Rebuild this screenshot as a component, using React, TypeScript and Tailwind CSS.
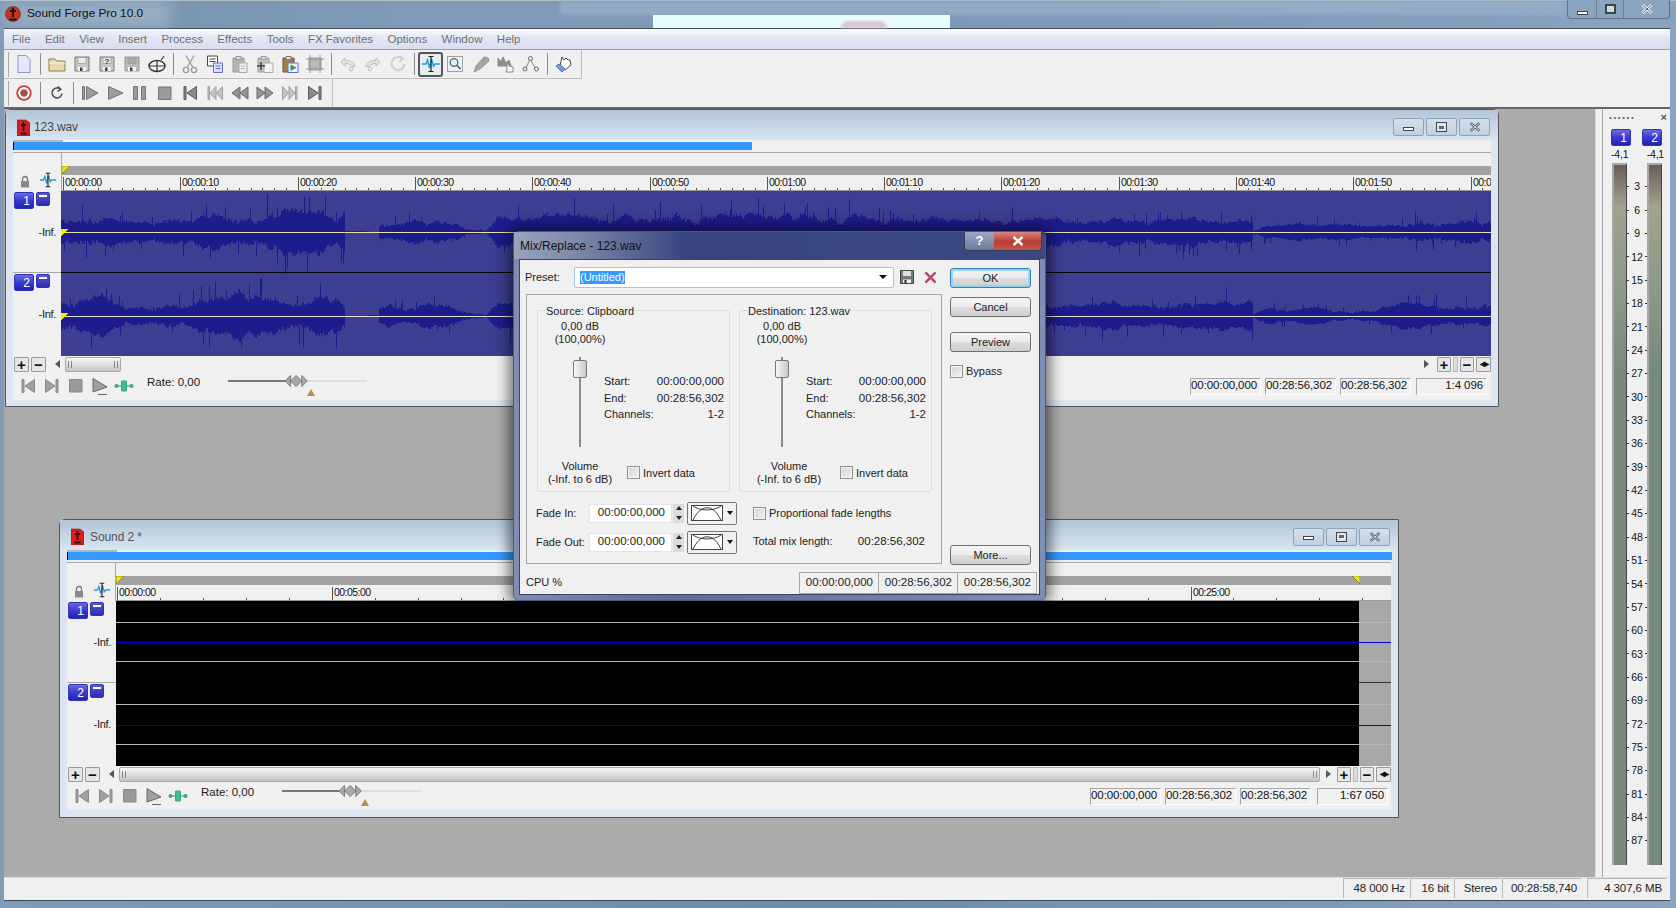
import type { ReactNode } from "react";

const FONT = "font-['Liberation_Sans',Arial,sans-serif]";

const MENUS = ["File", "Edit", "View", "Insert", "Process", "Effects", "Tools", "FX Favorites", "Options", "Window", "Help"];
const SCALE = Array.from({ length: 29 }, (_, i) => (i + 1) * 3);

function rng(seed: number) {
  let s = seed;
  return () => {
    s = (s * 16807) % 2147483647;
    return (s - 1) / 2147483646;
  };
}

// amplitude envelope, read off the picture: [x inside the track, amplitude]
const ENV: [number, number][] = [
  [0, 13], [40, 12], [60, 9], [100, 11], [170, 15], [230, 16], [283, 15], [284, 0.5], [317, 0.5], [318, 9], [394, 9], [405, 3],
  [425, 1], [436, 10], [480, 13], [700, 13], [983, 10], [1130, 10], [1191, 10], [1192, 1], [1205, 6], [1260, 6], [1310, 5], [1345, 9], [1430, 9],
];

function envAt(x: number) {
  for (let i = 1; i < ENV.length; i++) {
    if (x <= ENV[i][0]) {
      const [x0, a0] = ENV[i - 1];
      const [x1, a1] = ENV[i];
      return a0 + ((a1 - a0) * (x - x0)) / (x1 - x0 || 1);
    }
  }
  return 10;
}

function wavePath(cy: number, seed: number) {
  const r = rng(seed);
  let d = "";
  let w = 0;
  for (let x = 0; x < 1430; x++) {
    const a = envAt(x);
    w = (w + (r() - 0.5) * 0.3) * 0.93;
    const spike = r() < 0.05 ? a * (0.4 + r() * 1.0) : 0;
    const spike2 = r() < 0.04 ? a * (0.4 + r() * 0.9) : 0;
    const top = a * (1 + w) + r() * a * 0.22 + spike;
    const bot = a * (1 + w) + r() * a * 0.22 + spike2;
    d += `M${x + 0.5} ${(cy - top).toFixed(0)}V${(cy + bot).toFixed(0)}`;
  }
  return d;
}

function Glyph({ children, className = "" }: { children: ReactNode; className?: string }) {
  return (
    <svg viewBox="0 0 20 20" className={`h-[20px] w-[20px] ${className}`}>
      {children}
    </svg>
  );
}

const TRI = { fill: "#9c9c9c", stroke: "#747474" };
const DIM = { fill: "#c4c4c4", stroke: "#a0a0a0" };

function Floppy({ dim = false, children }: { dim?: boolean; children?: ReactNode }) {
  return (
    <>
      <path d="M3 3h14v14H3z" fill={dim ? "#b8b8b8" : "#c9c9c9"} stroke={dim ? "#999" : "#777"} />
      <path d="M6 3.5h8v6H6z" fill={dim ? "#a6a6a6" : "#ececec"} stroke={dim ? "#999" : "#888"} strokeWidth=".6" />
      <path d="M6 13h8v4H6z" fill="#f2f2f2" />
      <path d="M8 13.5h2.5v3.5H8z" fill="#444" />
      {children}
    </>
  );
}

const TB1: Record<string, ReactNode> = {
  new: <path d="M4 1.5h8l4 4v13H4z" fill="#e4e8f8" stroke="#8d92dc" />,
  open: (
    <>
      <path d="M2 5h6l2 2h8v10H2z" fill="#e6dab0" stroke="#8c7c4e" />
      <path d="M2 9h16" stroke="#fff5d0" />
    </>
  ),
  save: <Floppy />,
  saveas: (
    <Floppy>
      <text x="10" y="10" textAnchor="middle" fontSize="8" fontWeight="700" fill="#333">?</text>
    </Floppy>
  ),
  wave: <Floppy dim />,
  burn: (
    <>
      <ellipse cx="10" cy="12" rx="8" ry="5.5" fill="#f4f4f4" stroke="#333" strokeWidth="1.4" />
      <path d="M2 12h16M10 7v10M14 6l3-4" stroke="#333" strokeWidth="1.2" fill="none" />
    </>
  ),
  cut: (
    <>
      <circle cx="6" cy="16" r="2.6" fill="none" stroke="#9a9a9a" strokeWidth="1.4" />
      <circle cx="14" cy="16" r="2.6" fill="none" stroke="#9a9a9a" strokeWidth="1.4" />
      <path d="M7 13.6 14 1.5M13 13.6 6 1.5" stroke="#a4a4a4" strokeWidth="1.4" />
    </>
  ),
  copy: (
    <>
      <path d="M2.5 2h10v10h-10z" fill="#fff" stroke="#444" />
      <path d="M4.5 5h6M4.5 7.5h6" stroke="#444" />
      <path d="M8.5 9h9v9.5h-9z" fill="#dfe2f8" stroke="#666cd0" />
      <path d="M10.5 12h5M10.5 14.5h5" stroke="#666cd0" />
    </>
  ),
  paste: (
    <>
      <path d="M3 4h11v14H3z" fill="#b4b4b4" stroke="#999" />
      <path d="M6 2.5h5v3H6z" fill="#ddd" stroke="#999" />
      <path d="M9 9h8v9.5H9z" fill="#eee" stroke="#aaa" />
      <path d="M11 12h4M11 14.5h4" stroke="#bbb" />
    </>
  ),
  pastenew: (
    <>
      <path d="M3 4h11v14H3z" fill="#c4c4c4" stroke="#999" />
      <path d="M6 2.5h5v3H6z" fill="#ddd" stroke="#999" />
      <path d="M9 9h9v9.5H9z" fill="#f4f4f4" stroke="#aaa" />
      <path d="M2 12h8M6 8v8" stroke="#444" strokeWidth="1.6" />
    </>
  ),
  mix: (
    <>
      <path d="M3 4h11v14H3z" fill="#a67c4a" stroke="#6e5030" />
      <path d="M6 2.5h5v3H6z" fill="#e8e8e8" stroke="#777" />
      <path d="M8 9h10v9.5H8z" fill="#eef0fb" stroke="#666cd0" />
      <path d="M10.5 10.5l6 3.2-6 3.2z" fill="#2e9a58" />
    </>
  ),
  crop: (
    <>
      <path d="M4 4h12v12H4z" fill="#b8b8b8" stroke="#999" />
      <path d="M1 5h18M1 15h18M5 1v18M15 1v18" stroke="#9a9a9a" />
    </>
  ),
  undo: (
    <>
      <path d="M3 8l4-4v2.500c5 0 9 1 10 6h-3c-1-2-4-3-7-3v2.500z" fill="#e4e4e4" stroke="#bcbcbc" />
      <circle cx="13" cy="15" r="1.800" fill="none" stroke="#bcbcbc" />
    </>
  ),
  redo: (
    <>
      <path d="M17 8l-4-4v2.500c-5 0-9 1-10 6h3c1-2 4-3 7-3v2.500z" fill="#e4e4e4" stroke="#bcbcbc" />
      <circle cx="7" cy="15" r="1.800" fill="none" stroke="#bcbcbc" />
    </>
  ),
  repeat: <path d="M14.500 4.800A6.500 6.500 0 1 0 16.500 10M11.500 2l3.400 2.800-3.400 2.600" fill="none" stroke="#d0d0d0" strokeWidth="2.200" />,
  edit: (
    <>
      <path d="M1 10h4l1.500-4 2 8 2-9 2 7 1.500-2h5" fill="none" stroke="#2a9ad8" strokeWidth="1.500" />
      <path d="M7.500 2.500h5M7.500 17.500h5M10 2.500v15" stroke="#222" strokeWidth="1.200" />
    </>
  ),
  zoom: (
    <>
      <path d="M1.500 2.500h15v15h-15z" fill="none" stroke="#555" strokeDasharray="1 1" />
      <circle cx="8" cy="8.500" r="3.800" fill="#dcecf8" stroke="#4f6b85" strokeWidth="1.300" />
      <path d="M11 11.500l3.500 3.500" stroke="#555" strokeWidth="1.600" />
    </>
  ),
  pencil: <path d="M3 18l2-6L13 3l4 1 1 3-9 8zM13 3l-1 5" fill="#a4a4a4" stroke="#999" />,
  event: (
    <>
      <path d="M2 4l3 4 2-5 3 6 3-3 2 6H2z" fill="#8f8f8f" stroke="#888" />
      <path d="M11 10v6l-1 2h7v-5l-4-1v-2z" fill="#fff" stroke="#888" />
    </>
  ),
  env: (
    <>
      <path d="M5 14l4-9 5 9" fill="none" stroke="#8a8a8a" />
      <circle cx="4" cy="15" r="2" fill="#f0f0f0" stroke="#666" />
      <circle cx="9.500" cy="4.500" r="2" fill="#f0f0f0" stroke="#666" />
      <circle cx="15.500" cy="15" r="2" fill="#f0f0f0" stroke="#666" />
    </>
  ),
  hand: (
    <>
      <path d="M8 3l2 3 2-2 2 2 2 0 1 5-6 5-5-4z" fill="#fff" stroke="#444" />
      <path d="M2 12l6 6 3-3-6-5z" fill="#7a9bd8" stroke="#4a6fb8" />
    </>
  ),
};

const TB2: Record<string, ReactNode> = {
  record: (
    <>
      <circle cx="10" cy="10" r="6.800" fill="#f4f4f4" stroke="#cc3a3a" strokeWidth="1.700" />
      <circle cx="10" cy="10" r="3.300" fill="#b04848" stroke="#777" />
    </>
  ),
  loop: <path d="M13.500 6.300A5 5 0 1 0 15 10.500M11 3.500l2.800 2.900-3.300 1.800" fill="none" stroke="#555" strokeWidth="1.600" />,
  playall: (
    <>
      <path d="M2.500 3.500h2v13h-2z" {...TRI} />
      <path d="M6.500 3.500 18 10 6.500 16.500z" {...TRI} />
    </>
  ),
  play: <path d="M3.500 3.500 18 10 3.500 16.500z" {...TRI} />,
  pause: <path d="M3.500 3.500h4v13h-4zM11.500 3.500h4v13h-4z" {...TRI} />,
  stop: <path d="M3.500 4h12.500v12.500H3.500z" {...TRI} />,
  prev: <path d="M4 3.500h2v13H4zM16.500 3.500v13L7 10z" fill="#8a8a8a" stroke="#5a5a5a" />,
  first: <path d="M3 3.500h1.500v13H3zM11 3.500v13L5 10zM17.500 3.500v13L11.500 10z" {...DIM} />,
  rew: <path d="M10 4v12L2 10zM18 4v12l-8-6z" fill="#949494" stroke="#666" />,
  ff: <path d="M10 4v12l8-6zM2 4v12l8-6z" fill="#949494" stroke="#666" />,
  next: <path d="M17 3.500h-1.500v13H17zM9 3.500v13l6-6.500zM2.500 3.500v13l6-6.500z" {...DIM} />,
  end: <path d="M16 3.500h-2v13h2zM3.500 3.500v13L13 10z" fill="#8a8a8a" stroke="#5a5a5a" />,
};

function ToolBtn({ icon, set, active }: { icon: string; set: Record<string, ReactNode>; active?: boolean }) {
  return (
    <div className={`flex h-[25px] w-[25px] flex-none items-center justify-center ${active ? "rounded-[3px] border-2 border-[#555] bg-[#e6edf3]" : ""}`}>
      <Glyph>{set[icon]}</Glyph>
    </div>
  );
}

function Sep() {
  return (
    <div className="flex h-[25px] w-[8px] flex-none items-center justify-center">
      <div className="h-[22px] w-px bg-[#8c8c8c]" />
    </div>
  );
}

function Grip() {
  return <div className="ml-[4px] mr-[2px] h-[25px] w-px flex-none bg-[#a8a8a8]" />;
}

function MainToolbars() {
  return (
    <div className="h-[57px] bg-[#f0f0f0]">
      <div className="flex h-[29px] w-[578px] items-center border-b border-r border-[#bdbdbd]">
        <Grip />
        <ToolBtn icon="new" set={TB1} />
        <Sep />
        {["open", "save", "saveas", "wave", "burn"].map((i) => <ToolBtn key={i} icon={i} set={TB1} />)}
        <Sep />
        {["cut", "copy", "paste", "pastenew", "mix", "crop"].map((i) => <ToolBtn key={i} icon={i} set={TB1} />)}
        <Sep />
        {["undo", "redo", "repeat"].map((i) => <ToolBtn key={i} icon={i} set={TB1} />)}
        <Sep />
        <ToolBtn icon="edit" set={TB1} active />
        {["zoom", "pencil", "event", "env"].map((i) => <ToolBtn key={i} icon={i} set={TB1} />)}
        <Sep />
        <ToolBtn icon="hand" set={TB1} />
      </div>
      <div className="flex h-[28px] w-[329px] items-center border-r border-[#bdbdbd]">
        <Grip />
        <ToolBtn icon="record" set={TB2} />
        <Sep />
        <ToolBtn icon="loop" set={TB2} />
        <Sep />
        {["playall", "play", "pause", "stop", "prev", "first", "rew", "ff", "next", "end"].map((i) => <ToolBtn key={i} icon={i} set={TB2} />)}
      </div>
    </div>
  );
}

function Flag({ right }: { right?: boolean }) {
  return (
    <svg viewBox="0 0 7 7" className="h-[8px] w-[8px]">
      <path d={right ? "M0 0h7v7z" : "M0 0h7L0 7z"} fill="#f5e800" stroke="#555" strokeWidth=".5" />
    </svg>
  );
}

function ChanBtn({ n }: { n: number }) {
  return (
    <div className="flex h-[17px] w-[20px] flex-none items-center justify-end rounded-[2px] border border-[#3232b4] bg-[linear-gradient(#6a6ae0,#3a3ad0_50%,#2323ae)] pr-[3px] text-[12px] leading-none text-white">
      {n}
    </div>
  );
}

function ChanCol({ n, h }: { n: number; h: string }) {
  return (
    <div className={`relative flex-none border-b border-[#a8a8a8] ${h}`}>
      <div className="flex gap-[2px] pl-[1px] pt-[1px]">
        <ChanBtn n={n} />
        <div className="flex h-[14px] w-[14px] items-start justify-center rounded-[2px] border border-[#3232b4] bg-[linear-gradient(#5858d8,#2c2cb0)] pt-[2px]">
          <div className="h-[2px] w-[8px] bg-white" />
        </div>
      </div>
      <div className="absolute right-[5px] top-[35px] text-[11px] leading-[13px] tracking-[-0.3px] text-[#222]">-Inf.</div>
    </div>
  );
}

function Transport() {
  return (
    <div className="flex items-center pl-[5px]">
      <div className="flex gap-[4px]">
        <Glyph><path d="M4 3.500h2v13H4zM16.500 3.500v13L7 10z" fill="#a0a0a0" stroke="#888" /></Glyph>
        <Glyph><path d="M16 3.500h-2v13h2zM3.500 3.500v13L13 10z" fill="#a0a0a0" stroke="#888" /></Glyph>
        <Glyph><path d="M3.500 3.500H16V16H3.500z" fill="#9a9a9a" stroke="#888" /></Glyph>
        <Glyph><path d="M3 2.500 17 11 3 16zM8 18.500h9" fill="#a0a0a0" stroke="#666" /></Glyph>
        <Glyph>
          <path d="M1 10h18" stroke="#3aa880" strokeWidth="1.200" />
          <circle cx="2.500" cy="10" r="2" fill="#3aa880" />
          <circle cx="17.500" cy="10" r="2" fill="#3aa880" />
          <path d="M7.500 5h5v10h-5z" fill="#45b894" stroke="#3aa880" />
        </Glyph>
      </div>
      <div className="-mt-[6px] ml-[13px] w-[81px] text-[11.5px] text-[#1a1a1a]">Rate: 0,00</div>
      <div className="relative -mt-[10px] h-[2px] w-[139px] bg-[linear-gradient(90deg,#777_0,#777_45%,#ddd_45%,#ddd_100%)]">
        <svg viewBox="0 0 28 12" className="absolute left-[57px] top-[-5px] h-[12px] w-[26px]">
          <path d="M0 6l6-6v12zM6 6l6-6 6 6-6 6zM18 0l6 6-6 6z" fill="#a8a8a8" stroke="#777" />
        </svg>
        <svg viewBox="0 0 8 7" className="absolute left-[79px] top-[9px] h-[7px] w-[8px]">
          <path d="M4 0l4 7H0z" fill="#bf8c50" />
        </svg>
      </div>
    </div>
  );
}

function Cell({ children, w = "w-[71px]" }: { children: ReactNode; w?: string }) {
  return (
    <div className={`flex h-[17px] flex-none items-center justify-end border border-b-white border-l-[#a8a8a8] border-r-white border-t-[#a8a8a8] pr-[3px] text-[11.5px] tracking-[-0.1px] text-[#111] ${w}`}>
      {children}
    </div>
  );
}

function SmallBtn({ children, w = "w-[15px]" }: { children: ReactNode; w?: string }) {
  return (
    <div className={`flex h-[15px] flex-none items-center justify-center rounded-[1px] border border-[#9a9a9a] bg-[#e6e6e6] text-[15px] font-bold leading-none text-[#111] ${w}`}>
      {children}
    </div>
  );
}

function Thumb({ className }: { className: string }) {
  return (
    <div className={`flex h-[15px] items-center justify-between rounded-[2px] border border-[#a8a8a8] bg-[linear-gradient(#f6f6f6,#dcdcdc_55%,#c4c4c4)] px-[2px] ${className}`}>
      <div className="h-[7px] w-[4px] border-x border-[#888]" />
      <div className="h-[7px] w-[4px] border-x border-[#888]" />
    </div>
  );
}

function MdiBtns() {
  const cls = "flex h-[18px] w-[31px] items-center justify-center rounded-[2px] border border-[#8fa3b8] bg-[linear-gradient(#d4e0ec,#c0d0e0)]";
  return (
    <div className="flex gap-[2px]">
      <div className={cls}><div className="mt-[3px] h-[4px] w-[11px] border border-[#444] bg-white" /></div>
      <div className={cls}><div className="flex h-[10px] w-[11px] items-center justify-center border border-[#444] bg-[#dfe8f0]"><div className="h-[3px] w-[5px] bg-[#667]" /></div></div>
      <div className={cls}>
        <svg viewBox="0 0 12 10" className="h-[10px] w-[12px]">
          <path d="M1.500 1 10.500 9M10.500 1 1.500 9" stroke="#667" strokeWidth="2.600" />
          <path d="M1.500 1 10.500 9M10.500 1 1.500 9" stroke="#eef" strokeWidth=".8" />
        </svg>
      </div>
    </div>
  );
}

function DocIcon() {
  return (
    <svg viewBox="0 0 13 17" className="h-[17px] w-[13px] flex-none">
      <path d="M0 1h9l4 3v13H0z" fill="#d81e1e" stroke="#8a1010" strokeWidth=".6" />
      <path d="M6.500 3v9M4 6h5M3.500 14.500h6" stroke="#331010" strokeWidth="1.800" />
    </svg>
  );
}

function Ticks({ major, minor, n }: { major: number; minor: number; n: number }) {
  let d = "";
  const count = Math.round(major / minor);
  for (let i = 0; i <= n * count + count; i++) {
    const x = Math.round(i * minor) + 1.5;
    d += `M${x} ${i % count === 0 ? 2 : 13}V16`;
  }
  return (
    <svg className="absolute inset-0 h-[16px] w-full" shapeRendering="crispEdges">
      <path d={d} stroke="#555" fill="none" />
      <path d="M0 15.500H2000" stroke="#999" />
    </svg>
  );
}

function Ruler({ labels, major, minor }: { labels: string[]; major: number; minor: number }) {
  return (
    <div className="relative h-[16px] overflow-hidden bg-[#f0f0f0]">
      <Ticks major={major} minor={minor} n={labels.length} />
      {labels.map((l, i) => (
        <span key={l} className="absolute top-[1px] pl-[2px] text-[10.5px] leading-[12px] tracking-[-0.55px] text-[#111]" style={{ left: Math.round(i * major) + 1 }}>
          {l}
        </span>
      ))}
    </div>
  );
}

function RulerHead({ labels, major, minor, endFlag, blueClass }: { labels: string[]; major: number; minor: number; endFlag?: string; blueClass: string }) {
  return (
    <>
      <div className="relative h-[12px] bg-[#f0f0f0]">
        <div className="absolute left-0 top-0 h-[2px] w-[50px] bg-[#b4b4b4]" />
        <div className="absolute left-0 top-[2px] h-[8px] w-[1px] bg-black" />
        <div className={`ml-[1px] mt-[2px] h-[8px] bg-[#3399ff] ${blueClass}`} />
      </div>
      <div className="flex h-[39px] border-t border-[#a8a8a8]">
        <div className="flex w-[48px] flex-none items-end justify-around bg-[#f0f0f0] pb-[2px] pl-[3px]">
          <svg viewBox="0 0 10 13" className="mb-[1px] h-[13px] w-[10px]">
            <path d="M2.500 6V4a2.500 2.500 0 0 1 5 0v2" fill="none" stroke="#777" strokeWidth="1.300" />
            <path d="M1 6h8v6.500H1z" fill="#8a8a8a" />
          </svg>
          <Glyph className="!h-[18px] !w-[18px]">{TB1.edit}</Glyph>
        </div>
        <div className="min-w-0 flex-1 border-l border-[#a8a8a8]">
          <div className="h-[13px] bg-[#f0f0f0]" />
          <div className="flex h-[9px] justify-between overflow-hidden bg-[#a2a2a2]">
            <Flag />
            {endFlag && <div className={endFlag}><Flag right /></div>}
          </div>
          <Ruler labels={labels} major={major} minor={minor} />
        </div>
      </div>
    </>
  );
}

const LABELS1 = ["00:00:00", "00:00:10", "00:00:20", "00:00:30", "00:00:40", "00:00:50", "00:01:00", "00:01:10", "00:01:20", "00:01:30", "00:01:40", "00:01:50", "00:02:00"];
const LABELS2 = ["00:00:00", "00:05:00", "00:10:00", "00:15:00", "00:20:00", "00:25:00"];
const WAVE1 = wavePath(41, 12345);
const WAVE2 = wavePath(125, 54321);

function ScrollEnd() {
  return (
    <>
      <SmallBtn w="w-[14px]">+</SmallBtn>
      <div className="h-[15px] w-[5px] border border-[#bbb] bg-[#ddd]" />
      <SmallBtn w="w-[14px]">−</SmallBtn>
      <SmallBtn w="w-[15px]"><span className="text-[10px] tracking-[-1px]">◂▸</span></SmallBtn>
    </>
  );
}

function Doc1() {
  return (
    <div className="absolute left-[5px] top-[109px] flex h-[298px] w-[1494px] flex-col rounded-tl-[6px] rounded-tr-[6px] border border-[#555] bg-[#dbe6f2]">
      <div className="flex h-[30px] flex-none items-center justify-between bg-[linear-gradient(#b3c5d7,#d8e5f2)] pl-[11px] pr-[8px] pt-[4px]">
        <div className="flex items-center gap-[4px] text-[12px] tracking-[-0.1px] text-[#444]"><DocIcon />123.wav</div>
        <MdiBtns />
      </div>
      <div className="mx-[7px] flex h-[260px] flex-col bg-[#f0f0f0]">
        <RulerHead labels={LABELS1} major={117.3} minor={11.73} blueClass="w-[738px]" />
        <div className="flex h-[165px] flex-none">
          <div className="w-[48px] flex-none">
            <ChanCol n={1} h="h-[82px]" />
            <ChanCol n={2} h="h-[83px] !border-b-0" />
          </div>
          <svg className="h-[165px] flex-1" shapeRendering="crispEdges">
            <rect width="1500" height="165" fill="#3d3d91" />
            <path d={WAVE1} stroke="#1c1c8c" fill="none" />
            <path d={WAVE2} stroke="#1c1c8c" fill="none" />
            <path d="M0 41.500H1500" stroke="#e6dfb0" />
            <path d="M0 81.500H1500" stroke="#000" />
            <path d="M0 125.500H1500" stroke="#e8e4d4" />
            <path d="M0 38v7l7-7zM0 122v7l7-7z" fill="#f5e800" />
          </svg>
        </div>
        <div className="flex h-[16px] flex-none items-center gap-[2px] pl-[1px]">
          <SmallBtn>+</SmallBtn>
          <SmallBtn>−</SmallBtn>
          <div className="ml-[7px] mr-[3px] h-0 w-0 border-y-[4px] border-r-[5px] border-y-transparent border-r-[#555]" />
          <Thumb className="w-[56px]" />
          <div className="flex-1" />
          <div className="mr-[6px] h-0 w-0 border-y-[4px] border-l-[5px] border-y-transparent border-l-[#555]" />
          <ScrollEnd />
        </div>
        <div className="flex flex-1 items-center justify-between pr-[4px]">
          <Transport />
          <div className="flex gap-[4px]">
            <Cell>00:00:00,000</Cell>
            <Cell>00:28:56,302</Cell>
            <Cell>00:28:56,302</Cell>
            <div className="ml-[1px]"><Cell>1:4 096</Cell></div>
          </div>
        </div>
      </div>
    </div>
  );
}

function Doc2() {
  return (
    <div className="absolute left-[59px] top-[519px] flex h-[299px] w-[1340px] flex-col rounded-tl-[6px] border border-[#555] bg-[#dbe6f2]">
      <div className="flex h-[30px] flex-none items-center justify-between bg-[linear-gradient(#b3c5d7,#d8e5f2)] pl-[11px] pr-[8px] pt-[3px]">
        <div className="flex items-center gap-[6px] text-[12px] tracking-[-0.1px] text-[#555]"><DocIcon />Sound 2 *</div>
        <MdiBtns />
      </div>
      <div className="mx-[7px] flex h-[260px] flex-col bg-[#f0f0f0]">
        <RulerHead labels={LABELS2} major={214.7} minor={42.94} blueClass="w-full" endFlag="mr-[31px]" />
        <div className="flex h-[165px] flex-none">
          <div className="w-[49px] flex-none">
            <ChanCol n={1} h="h-[82px]" />
            <ChanCol n={2} h="h-[83px] !border-b-0" />
          </div>
          <svg className="h-[165px] flex-1" shapeRendering="crispEdges">
            <rect width="1500" height="165" fill="#a8a8a8" />
            <rect width="1243" height="165" fill="#000" />
            <path d="M0 21.500H1500M0 60.500H1500M0 103.500H1500M0 143.500H1500" stroke="#b8b8b8" />
            <path d="M0 41.500H1500M0 124.500H1500" stroke="#0000e0" />
            <path d="M1243 81.500H1500" stroke="#333" />
          </svg>
        </div>
        <div className="flex h-[16px] flex-none items-center gap-[2px] pl-[1px]">
          <SmallBtn>+</SmallBtn>
          <SmallBtn>−</SmallBtn>
          <div className="ml-[7px] mr-[3px] h-0 w-0 border-y-[4px] border-r-[5px] border-y-transparent border-r-[#555]" />
          <Thumb className="flex-1" />
          <div className="mx-[4px] h-0 w-0 border-y-[4px] border-l-[5px] border-y-transparent border-l-[#555]" />
          <ScrollEnd />
        </div>
        <div className="flex flex-1 items-center justify-between pr-[3px]">
          <Transport />
          <div className="flex gap-[4px]">
            <Cell>00:00:00,000</Cell>
            <Cell>00:28:56,302</Cell>
            <Cell>00:28:56,302</Cell>
            <div className="ml-[2px]"><Cell>1:67 050</Cell></div>
          </div>
        </div>
      </div>
    </div>
  );
}

function AeroBtn({ children, ok, className = "" }: { children: ReactNode; ok?: boolean; className?: string }) {
  return (
    <div className={`flex h-[20px] w-[81px] items-center justify-center rounded-[3px] border bg-[linear-gradient(#f4f4f4,#ececec_48%,#dcdcdc_52%,#cfcfcf)] text-[11px] text-[#222] ${ok ? "border-[#3c7fb1] shadow-[inset_0_0_0_2px_#8fd5f5]" : "border-[#707070]"} ${className}`}>
      {children}
    </div>
  );
}

function Check({ label, className = "" }: { label: string; className?: string }) {
  return (
    <div className={`flex items-center gap-[3px] whitespace-nowrap text-[11px] text-[#222] ${className}`}>
      <div className="h-[13px] w-[13px] flex-none border border-[#8e8f8f] bg-[linear-gradient(135deg,#d4d4d4,#f2f2f2)] shadow-[inset_0_0_0_1px_#f4f4f4]" />
      {label}
    </div>
  );
}

function Group({ title, volCls, chkCls }: { title: string; volCls: string; chkCls: string }) {
  return (
    <div className="relative h-[182px] w-[193px] rounded-[3px] border border-[#dcdcdc]">
      <div className="absolute -top-[7px] left-[7px] bg-[#f0f0f0] px-[1px] text-[11px] leading-[14px] text-[#222]">{title}</div>
      <div className="flex h-full">
        <div className="ml-[18px] flex w-[48px] flex-none flex-col items-center pt-[9px] leading-[13px]">
          <div className="whitespace-nowrap text-center">0,00 dB<br />(100,00%)</div>
          <div className="relative mt-[11px] h-[90px] w-[2px] flex-none bg-[#8a8a8a]">
            <div className="absolute -left-[6px] top-[3px] h-[18px] w-[14px] rounded-[2px] border border-[#777] bg-[linear-gradient(90deg,#f8f8f8,#c8c8c8)]" />
          </div>
          <div className={`mt-[13px] whitespace-nowrap text-center ${volCls}`}>Volume<br />(-Inf. to 6 dB)</div>
        </div>
        <div className="flex min-w-0 flex-1 flex-col justify-between pb-[10px] pr-[5px] pt-[62px]">
          <div className="grid grid-cols-[auto_1fr] leading-[16.5px]">
            <span>Start:</span><span className="text-right text-[11.5px]">00:00:00,000</span>
            <span>End:</span><span className="text-right text-[11.5px]">00:28:56,302</span>
            <span>Channels:</span><span className="text-right text-[11.5px]">1-2</span>
          </div>
          <Check label="Invert data" className={chkCls} />
        </div>
      </div>
    </div>
  );
}

function CurveBtn() {
  return (
    <div className="ml-[3px] flex h-[23px] w-[50px] flex-none items-center gap-[4px] rounded-[2px] border border-[#777] pl-[3px]">
      <svg viewBox="0 0 32 16" className="h-[16px] w-[32px] border border-[#444] bg-white">
        <path d="M0 16C6 4 12 2 16 2s10 2 16 14M0 0c8 6 24 6 32 0" fill="none" stroke="#222" />
      </svg>
      <div className="h-0 w-0 border-x-[3px] border-t-[4px] border-x-transparent border-t-[#111]" />
    </div>
  );
}

function FadeRow({ label, children }: { label: string; children: ReactNode }) {
  return (
    <div className="flex h-[24px] items-center pl-[9px]">
      <div className="w-[53px] flex-none">{label}</div>
      <div className="flex h-[19px] w-[83px] flex-none items-center justify-end border border-[#e4e4e4] bg-white pr-[6px] text-[11.5px]">00:00:00,000</div>
      <div className="ml-[1px] flex h-[19px] w-[11px] flex-none flex-col items-center justify-around bg-[#dcdcdc]">
        <div className="h-0 w-0 border-x-[3px] border-b-[4px] border-x-transparent border-b-[#222]" />
        <div className="h-0 w-0 border-x-[3px] border-t-[4px] border-x-transparent border-t-[#222]" />
      </div>
      <CurveBtn />
      {children}
    </div>
  );
}

function Dialog() {
  return (
    <div className="absolute left-[513px] top-[231px] flex h-[370px] w-[533px] flex-col rounded-[6px] border border-[#4c5c78] bg-[linear-gradient(90deg,#7e8db0,#5c6c98_30%,#7d8fb4)] shadow-[0_0_14px_4px_rgba(0,0,0,0.55)]">
      <div className="relative flex h-[27px] flex-none items-center bg-[linear-gradient(90deg,#98a4bc,#7c88a8_12%,#3a4580_32%,#3c4880)] pl-[6px] text-[12px] text-[#111]">
        Mix/Replace - 123.wav
        <div className="absolute right-[3px] top-0 flex h-[19px] overflow-hidden rounded-b-[4px] border border-t-0 border-[#333d58]">
          <div className="flex w-[29px] items-center justify-center bg-[linear-gradient(#9aa8c4,#6c7a9a)] text-[13px] font-bold text-white">?</div>
          <div className="flex w-[47px] items-center justify-center bg-[linear-gradient(#d98880,#bb3a30_55%,#c05850)]">
            <svg viewBox="0 0 12 10" className="h-[10px] w-[12px]"><path d="M1.500 1 10.500 9M10.500 1 1.500 9" stroke="#fff" strokeWidth="2.400" /></svg>
          </div>
        </div>
      </div>
      <div className="mx-[5px] flex h-[336px] flex-col border border-[#3a4560] bg-[#f0f0f0] text-[11px] text-[#222]">
        <div className="flex h-[304px] flex-none">
          <div className="w-[423px] flex-none">
            <div className="flex h-[34px] items-center pl-[5px]">
              <div className="w-[49px] flex-none">Preset:</div>
              <div className="flex h-[21px] w-[320px] flex-none items-center justify-between rounded-[2px] border border-[#a9c4dc] bg-white pl-[5px] pr-[6px]">
                <span className="bg-[#3399ff] leading-[13px] text-white">(Untitled)</span>
                <div className="h-0 w-0 border-x-[4px] border-t-[4px] border-x-transparent border-t-[#111]" />
              </div>
              <svg viewBox="0 0 14 14" className="ml-[6px] h-[14px] w-[14px] flex-none">
                <path d="M.5.5h13v13H.5z" fill="#777" stroke="#444" />
                <path d="M3 1h8v5H3z" fill="#ddd" />
                <path d="M3 9.500h8V13H3z" fill="#f0f0f0" />
                <path d="M4.500 10h2v3h-2z" fill="#222" />
              </svg>
              <svg viewBox="0 0 14 14" className="ml-[10px] h-[13px] w-[13px] flex-none">
                <path d="M1.500 1.500l11 11M12.500 1.500l-11 11" stroke="#b04a62" strokeWidth="2.600" />
              </svg>
            </div>
            <div className="ml-[6px] h-[270px] w-[416px] border border-[#a8a8a8] pl-[10px] pt-[15px]">
              <div className="flex gap-[9px]">
                <Group title="Source: Clipboard" volCls="" chkCls="ml-[23px]" />
                <Group title="Destination: 123.wav" volCls="pl-[14px]" chkCls="ml-[34px]" />
              </div>
            </div>
            <div className="relative -mt-[63px] ml-[7px] flex w-[414px] flex-col">
              <FadeRow label="Fade In:">
                <Check label="Proportional fade lengths" className="ml-[16px]" />
              </FadeRow>
              <div className="mt-[5px]">
                <FadeRow label="Fade Out:">
                  <div className="ml-[16px] flex w-[172px] justify-between">
                    <span>Total mix length:</span>
                    <span className="text-[11.5px]">00:28:56,302</span>
                  </div>
                </FadeRow>
              </div>
            </div>
          </div>
          <div className="ml-[7px] flex w-[81px] flex-col pt-[8px]">
            <AeroBtn ok>OK</AeroBtn>
            <AeroBtn className="mt-[9px]">Cancel</AeroBtn>
            <AeroBtn className="mt-[15px]">Preview</AeroBtn>
            <Check label="Bypass" className="mt-[11px]" />
            <AeroBtn className="mb-[-1px] mt-auto">More...</AeroBtn>
          </div>
        </div>
        <div className="flex flex-1 items-end justify-between pl-[6px] pr-[2px]">
          <div className="pb-[4px]">CPU %</div>
          <div className="flex h-[22px] border-b border-r border-t border-[#a8a8a8] text-[11.5px]">
            <div className="flex w-[79px] items-center justify-end border-l border-[#a8a8a8] pr-[5px]">00:00:00,000</div>
            <div className="flex w-[79px] items-center justify-end border-l border-[#a8a8a8] pr-[5px]">00:28:56,302</div>
            <div className="flex w-[79px] items-center justify-end border-l border-[#a8a8a8] pr-[5px]">00:28:56,302</div>
          </div>
        </div>
      </div>
    </div>
  );
}

function Meter() {
  return (
    <div className="h-[702px] w-[15px] flex-none border-l-2 border-r border-t-2 border-l-[#a8a8a8] border-r-[#444] border-t-[#a8a8a8] bg-[linear-gradient(#6b5d58,#a2a28e_6%,#8a9a88_18%,#76897b_30%,#76897b)]" />
  );
}

function MeterPane() {
  return (
    <div className="flex w-[75px] flex-none border-l border-[#dcdcdc] bg-[#f0f0f0]">
      <div className="h-full w-[7px] flex-none border-r border-[#a8a8a8]" />
      <div className="min-w-0 flex-1 text-[11px] text-[#111]">
        <div className="flex h-[14px] items-center justify-between pl-[6px] pr-[3px] pt-[3px]">
          <span className="text-[8px] leading-none tracking-[1.6px] text-[#666]">••••••</span>
          <span className="text-[11px] font-bold leading-none text-[#555]">×</span>
        </div>
        <div className="flex gap-[11px] pl-[8px] pt-[6px]">
          <ChanBtn n={1} />
          <ChanBtn n={2} />
        </div>
        <div className="flex h-[17px] items-center justify-between pl-[8px] pr-[6px] text-[10.5px] tracking-[-0.2px]">
          <span>-4,1</span>
          <span>-4,1</span>
        </div>
        <div className="flex pl-[9px]">
          <Meter />
          <div className="w-[20px] flex-none pt-[12px]">
            {SCALE.map((s) => (
              <div key={s} className="flex h-[23.36px] items-center justify-between">
                <div className="h-px w-[2px] bg-[#333]" />
                <span className="text-[10.5px] leading-none tracking-[-0.2px]">{s}</span>
                <div className="h-px w-[2px] bg-[#333]" />
              </div>
            ))}
          </div>
          <Meter />
        </div>
      </div>
    </div>
  );
}

function StatusCell({ w, children }: { w: string; children: ReactNode }) {
  return (
    <div className={`flex h-[20px] flex-none items-center justify-end border-l border-t border-[#b8b8b8] pr-[4px] text-[11.5px] tracking-[-0.1px] text-[#222] ${w}`}>
      {children}
    </div>
  );
}

export default function App() {
  return (
    <div className={`relative h-[908px] w-[1676px] overflow-hidden bg-[linear-gradient(90deg,#7f9bb8,#6f8bab_50%,#8aa4c0)] ${FONT}`}>
      {/* blurred desktop showing through the glass title bar */}
      <div className="relative h-[28px] bg-[linear-gradient(90deg,#7592ad,#7f9bb7_25%,#7d99b6_55%,#88a3bf_100%)]">
        <div className="absolute inset-x-0 top-0 h-px bg-[#b0bcc8]" />
        <div className="absolute left-[560px] right-[110px] top-[1px] h-[14px] bg-[#9ab3ce] opacity-70 blur-[2px]" />
        <div className="absolute left-[653px] top-[15px] h-[13px] w-[297px] bg-[#e8fbff] blur-[0.5px]" />
        <div className="absolute left-[841px] top-[21px] h-[7px] w-[46px] rounded-t-full bg-[#d8c8d4] blur-[1px]" />
        <div className="absolute left-0 top-0 h-[28px] w-[170px] bg-[#b9c9da] opacity-50 blur-[8px]" />
        <div className="relative flex h-full items-center gap-[6px] pl-[5px] text-[11.8px] text-[#111]">
          <svg viewBox="0 0 16 16" className="h-[16px] w-[16px]">
            <circle cx="8" cy="8" r="7.500" fill="#c8321e" stroke="#5a2018" strokeWidth=".6" />
            <path d="M8 2v9M5 5h6M4.500 13.500h7" stroke="#2a1410" strokeWidth="2" />
          </svg>
          Sound Forge Pro 10.0
        </div>
        <div className="absolute right-[6px] top-0 flex h-[19px] w-[103px] rounded-b-[4px] border border-t-0 border-[#5d7590] bg-[#8aa5c0]">
          <div className="flex w-[29px] items-end justify-center border-r border-[#6d849c] pb-[3px]"><div className="h-[4px] w-[11px] border border-[#444] bg-white" /></div>
          <div className="flex w-[27px] items-center justify-center border-r border-[#6d849c]"><div className="h-[10px] w-[11px] border-2 border-[#444] bg-[#cfdbe6]" /></div>
          <div className="flex flex-1 items-center justify-center">
            <svg viewBox="0 0 12 10" className="h-[10px] w-[12px]"><path d="M1.500 1 10.500 9M10.500 1 1.500 9" stroke="#fff" strokeWidth="2.600" /><path d="M1.500 1 10.500 9M10.500 1 1.500 9" stroke="#555" strokeWidth="1" /></svg>
          </div>
        </div>
      </div>
      <div className="mx-[4px] mr-[6px] flex h-[873px] flex-col border-b border-t border-[#3c4854] bg-[#f0f0f0]">
        <div className="flex h-[21px] flex-none items-center gap-[14.4px] border-b border-[#9aa0a8] bg-[linear-gradient(#fff,#e6e9f6_35%,#d8deef)] pl-[8px] pt-[1px] text-[11.5px] text-[#6e6e6e]">
          {MENUS.map((m) => <span key={m}>{m}</span>)}
        </div>
        <MainToolbars />
        <div className="flex min-h-0 flex-1 border-t-2 border-[#666]">
          <div className="min-w-0 flex-1 bg-[#ababab]" />
          <MeterPane />
        </div>
        <div className="flex h-[23px] flex-none items-end justify-end gap-[1px] border-t border-[#dcdcdc] bg-[#f0f0f0] pb-[2px] pr-[4px]">
          <StatusCell w="w-[66px]">48 000 Hz</StatusCell>
          <StatusCell w="w-[43px]">16 bit</StatusCell>
          <StatusCell w="w-[47px]">Stereo</StatusCell>
          <StatusCell w="w-[79px]">00:28:58,740</StatusCell>
          <div className="ml-[5px]"><StatusCell w="w-[79px]">4 307,6 MB</StatusCell></div>
        </div>
      </div>
      <Doc1 />
      <Doc2 />
      <Dialog />
    </div>
  );
}
